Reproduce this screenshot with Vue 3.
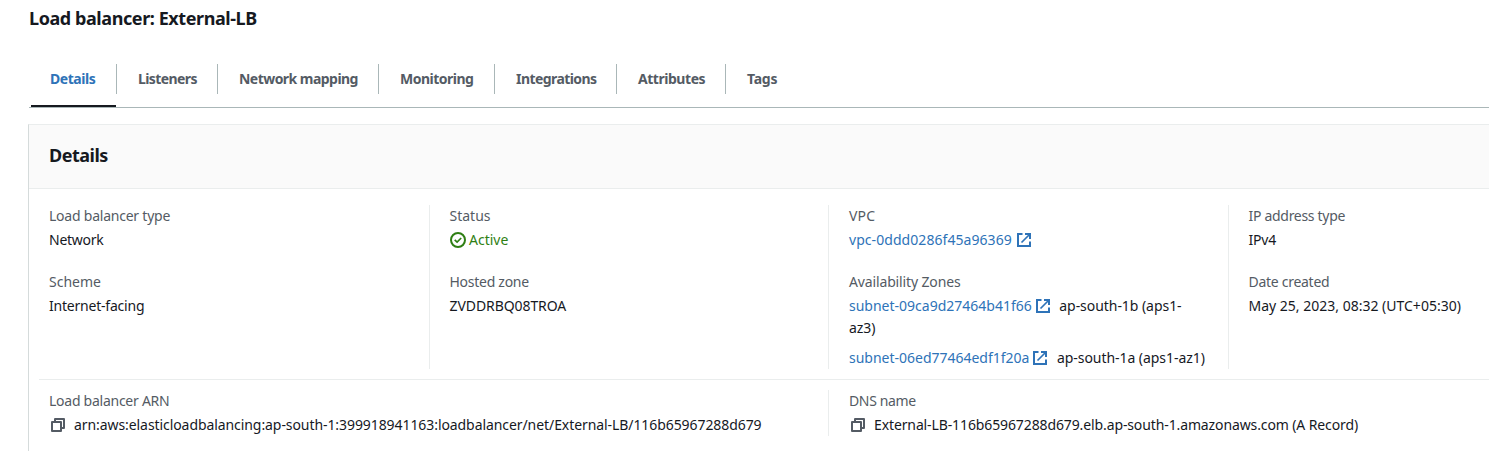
<script setup>
const tabs = ['Details', 'Listeners', 'Network mapping', 'Monitoring', 'Integrations', 'Attributes', 'Tags']
const subnets = [
  { id: 'subnet-09ca9d27464b41f66', zone: 'ap-south-1b (aps1-az3)', key: 's1' },
  { id: 'subnet-06ed77464edf1f20a', zone: 'ap-south-1a (aps1-az1)', key: 's2' },
]
</script>

<template>
  <main class="page">
    <h1><span class="t-title">Load balancer: External-LB</span></h1>

    <nav class="tabs">
      <a v-for="(tab, i) in tabs" :key="tab" class="tab" :class="{ active: i === 0 }">
        <span :class="'t-tab' + i">{{ tab }}</span>
      </a>
    </nav>

    <section class="panel">
      <header><h2><span class="t-head">Details</span></h2></header>

      <div class="columns">
        <div class="column">
          <div class="field">
            <div class="label"><span class="t-type">Load balancer type</span></div>
            <div class="value"><span class="t-network">Network</span></div>
          </div>
          <div class="field">
            <div class="label"><span class="t-scheme">Scheme</span></div>
            <div class="value"><span class="t-facing">Internet-facing</span></div>
          </div>
        </div>

        <div class="column">
          <div class="field">
            <div class="label"><span class="t-status">Status</span></div>
            <div class="value status">
              <svg class="icon check" viewBox="0 0 16 16"><circle cx="8" cy="8" r="7" /><path d="m4.7 7.8 2.4 2.3 4.1-4.1" /></svg>
              <span class="t-active">Active</span>
            </div>
          </div>
          <div class="field">
            <div class="label"><span class="t-hosted">Hosted zone</span></div>
            <div class="value"><span class="t-zone">ZVDDRBQ08TROA</span></div>
          </div>
        </div>

        <div class="column">
          <div class="field">
            <div class="label"><span class="t-vpc">VPC</span></div>
            <div class="value">
              <a class="link"><span class="t-vpcid">vpc-0ddd0286f45a96369</span><svg class="icon ext" viewBox="0 0 16 16"><path d="M6.5 2H2v12h12V9.5M9 2h5v5" /><path class="thin" d="m5.5 10.5 8-8" /></svg></a>
            </div>
          </div>
          <div class="field">
            <div class="label"><span class="t-zones">Availability Zones</span></div>
            <div v-for="s in subnets" :key="s.id" class="value subnet">
              <a class="link"><span :class="'t-' + s.key">{{ s.id }}</span><svg class="icon ext" viewBox="0 0 16 16"><path d="M6.5 2H2v12h12V9.5M9 2h5v5" /><path class="thin" d="m5.5 10.5 8-8" /></svg></a>
              <span class="zone">{{ s.zone }}</span>
            </div>
          </div>
        </div>

        <div class="column">
          <div class="field">
            <div class="label"><span class="t-ip">IP address type</span></div>
            <div class="value"><span class="t-ipv4">IPv4</span></div>
          </div>
          <div class="field">
            <div class="label"><span class="t-date">Date created</span></div>
            <div class="value"><span class="t-created">May 25, 2023, 08:32 (UTC+05:30)</span></div>
          </div>
        </div>
      </div>

      <div class="columns wide">
        <div class="column">
          <div class="label"><span class="t-arnlabel">Load balancer ARN</span></div>
          <div class="value copyable">
            <svg class="icon copy" viewBox="0 0 16 16"><path d="M2 5h9v9H2z" /><path d="M5 5V2h9v9h-3" /></svg>
            <span class="t-arn">arn:aws:elasticloadbalancing:ap-south-1:399918941163:loadbalancer/net/External-LB/116b65967288d679</span>
          </div>
        </div>
        <div class="column">
          <div class="label"><span class="t-dnslabel">DNS name</span></div>
          <div class="value copyable">
            <svg class="icon copy" viewBox="0 0 16 16"><path d="M2 5h9v9H2z" /><path d="M5 5V2h9v9h-3" /></svg>
            <span class="t-dns">External-LB-116b65967288d679.elb.ap-south-1.amazonaws.com (A Record)</span>
          </div>
        </div>
      </div>
    </section>
  </main>
</template>

<style>
body { margin: 0; background: #fff; }
</style>

<style scoped>
.page {
  box-sizing: border-box;
  width: 1489px;
  height: 451px;
  overflow: hidden;
  padding: 7px 0 0 28px;
  font-family: "Noto Sans", "Open Sans", sans-serif;
  font-size: 14px;
  line-height: 22px;
  color: #16191f;
}
h1, h2 { margin: 0; font-size: 18px; line-height: 22px; font-weight: 700; }
h1 { height: 29px; padding-left: 1px; }
span { white-space: nowrap; }
.tabs {
  display: grid;
  grid-template-columns: 88px 101px 161px 116px 122px 109px 1fr;
  height: 72px;
  margin-left: 1px;
  padding-top: 6px;
  box-sizing: border-box;
  border-bottom: 1px solid #aab7b8;
}
.tab {
  position: relative;
  box-sizing: border-box;
  height: 65px;
  padding: 26px 0 0 21px;
  font-weight: 700;
  color: #545b64;
}
.tab:not(:last-child)::before {
  content: "";
  position: absolute;
  right: 0;
  top: 22px;
  width: 1px;
  height: 30px;
  background: #aab7b8;
}
.tab.active { color: #2e73b8; }
.tab.active::after {
  content: "";
  position: absolute;
  left: 2px;
  right: 1px;
  bottom: 0;
  height: 2px;
  background: #16191f;
}
.panel { margin-top: 16px; border-left: 1px solid #d5dbdb; border-top: 1px solid #eaeded; height: 340px; }
header { height: 64px; padding: 19px 0 0 20px; box-sizing: border-box; background: #fafafa; border-bottom: 1px solid #eaeded; }
.columns { display: grid; grid-template-columns: 390px 399px 400px 1fr; margin-left: 10px; padding: 16px 0 10px; }
.column { height: 164px; padding: 0 22px 0 20px; border-left: 1px solid #eaeded; box-sizing: border-box; }
.column:first-child { border-left: 0; padding-left: 10px; }
.column:nth-child(2):not(.wide .column), .column:nth-child(4) { padding-left: 19.5px; }
.label { height: 24px; color: #545b64; }
.value { min-height: 22px; }
.field { height: 66px; }
.wide { grid-template-columns: 789px 1fr; border-top: 1px solid #eaeded; padding: 10px 0; }
.wide .column { height: 46px; }
.link { color: #2e73b8; white-space: nowrap; }
.subnet { margin-bottom: 8px; }
.subnet .zone { white-space: normal; margin-left: 8.5px; letter-spacing: -0.05px; }
.icon { flex: none; width: 16px; height: 16px; fill: none; stroke: currentColor; stroke-width: 2; }
.thin, .check path { stroke-width: 1.7; }
.ext { margin-left: 4px; vertical-align: -3px; }
.subnet .ext { margin-left: 3px; }
.status, .copyable { display: flex; align-items: center; }
.status { color: #2f7f14; gap: 3.5px; }
.copyable { gap: 8px; }
.copy { color: #545b64; margin-left: 1px; stroke-linejoin: round; }

/* Tracking per text run */
.t-title { letter-spacing: -0.42px; }
.t-head { letter-spacing: -0.5px; }
.t-tab0 { letter-spacing: -0.45px; }
.t-tab1 { letter-spacing: -0.58px; }
.t-tab2 { letter-spacing: -0.54px; }
.t-tab3 { letter-spacing: -0.5px; }
.t-tab4 { letter-spacing: -0.57px; }
.t-tab5 { letter-spacing: -0.46px; }
.t-tab6 { letter-spacing: -0.25px; }
.t-type { letter-spacing: -0.23px; }
.t-network { letter-spacing: -0.25px; }
.t-facing { letter-spacing: -0.21px; }
.t-hosted { letter-spacing: -0.27px; }
.t-zone { letter-spacing: -0.08px; }
.t-vpc { letter-spacing: 0.15px; }
.t-vpcid { letter-spacing: 0.06px; }
.t-zones { letter-spacing: -0.14px; }
.t-s2 { letter-spacing: -0.01px; }
.t-ip { letter-spacing: -0.3px; }
.t-ipv4 { letter-spacing: -0.2px; }
.t-date { letter-spacing: -0.28px; }
.t-arnlabel { letter-spacing: -0.26px; }
.t-arn { letter-spacing: -0.076px; }
.t-dnslabel { letter-spacing: -0.35px; }
.t-dns { letter-spacing: -0.115px; }
</style>
